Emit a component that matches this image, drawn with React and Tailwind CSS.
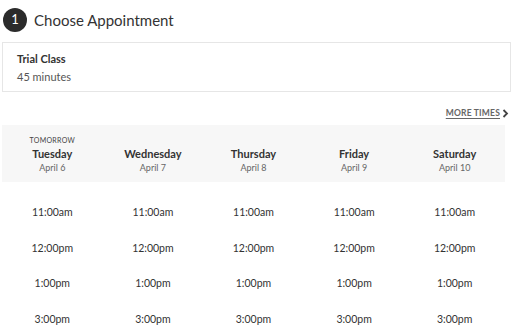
import React from "react";

const days = [
  { top: "Tomorrow", name: "Tuesday", date: "April 6" },
  { name: "Wednesday", date: "April 7" },
  { name: "Thursday", date: "April 8" },
  { name: "Friday", date: "April 9" },
  { name: "Saturday", date: "April 10" },
];

const times = ["11:00am", "12:00pm", "1:00pm", "3:00pm"];

const App = () => {
  return (
    <div className="w-[511px] h-[334px] overflow-hidden bg-white font-['Lato',sans-serif] text-[#333]">
      {/* Step header */}
      <div className="flex items-start gap-[7px] pl-[3px] pt-[8px] h-[42px]">
        <div className="w-[24px] h-[24px] rounded-full bg-[#2b2b2b] text-white flex items-center justify-center text-[13px]">
          1
        </div>
        <h1 className="text-[15px] leading-[24px] text-[#333]">Choose Appointment</h1>
      </div>

      {/* Appointment type */}
      <div className="ml-[2px] w-[509px] h-[50px] border border-[#e6e6e6] pl-[14px] pt-[9px]">
        <div className="text-[11px] font-bold leading-[14px]">Trial Class</div>
        <div className="text-[11px] leading-[14px] text-[#555] mt-[4px]">45 minutes</div>
      </div>

      {/* More times */}
      <div className="flex justify-end pr-[2px] mt-[14px] h-[14px]">
        <button className="flex items-center gap-[2px] text-[8.5px] font-bold tracking-[0.2px] text-[#666] leading-[14px]">
          <span className="underline underline-offset-2">MORE TIMES</span>
          <svg width="7" height="9" viewBox="0 0 7 9">
            <path d="M1.5 1 L5 4.5 L1.5 8" fill="none" stroke="#444" strokeWidth="1.8" />
          </svg>
        </button>
      </div>

      {/* Calendar */}
      <div className="ml-[2px] w-[503px] mt-[5px]">
        <div className="grid grid-cols-5 bg-[#f7f7f7] h-[57px] pt-[10px]">
          {days.map((d) => (
            <div key={d.name} className="flex flex-col items-center">
              <div className="text-[7px] uppercase tracking-[0.3px] text-[#444] leading-[10px] h-[10px]">
                {d.top}
              </div>
              <div className="text-[11px] font-bold leading-[15px] mt-[1px]">{d.name}</div>
              <div className="text-[9px] text-[#666] leading-[12px] mt-[1px]">{d.date}</div>
            </div>
          ))}
        </div>
        <div className="grid grid-cols-5 pt-[23px]">
          {days.map((d) => (
            <div key={d.name} className="flex flex-col items-center gap-[21.5px]">
              {times.map((t) => (
                <div key={t} className="text-[10.5px] leading-[14px] text-[#333]">
                  {t}
                </div>
              ))}
            </div>
          ))}
        </div>
      </div>
    </div>
  );
};

export default App;
